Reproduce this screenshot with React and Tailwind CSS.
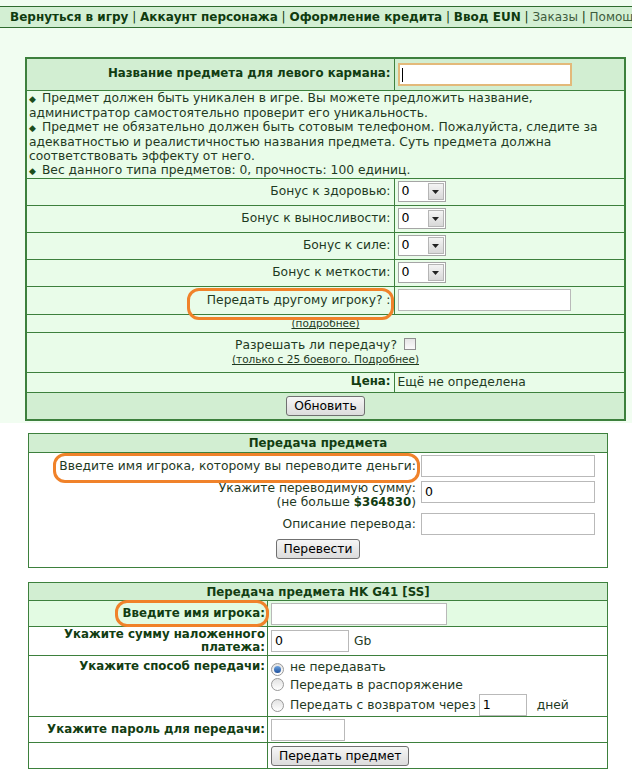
import React from 'react';

const nav = [
  { label: 'Вернуться в игру', bold: true },
  { label: 'Аккаунт персонажа', bold: true },
  { label: 'Оформление кредита', bold: true },
  { label: 'Ввод EUN', bold: true },
  { label: 'Заказы', bold: false },
  { label: 'Помощь', bold: false },
];

const bonuses = ['Бонус к здоровью:', 'Бонус к выносливости:', 'Бонус к силе:', 'Бонус к меткости:'];

const notes = [
  'Предмет должен быть уникален в игре. Вы можете предложить название, администратор самостоятельно проверит его уникальность.',
  'Предмет не обязательно должен быть сотовым телефоном. Пожалуйста, следите за адекватностью и реалистичностью названия предмета. Суть предмета должна соответствовать эффекту от него.',
  'Вес данного типа предметов: 0, прочность: 100 единиц.',
];

// orange marker ring drawn over a label
const Ring = ({ className }) => (
  <span className={`pointer-events-none absolute rounded-[12px] border-[3px] border-[#f0822a] ${className}`} />
);

const TextBox = ({ className = '', value = '' }) => (
  <div className={`h-[22px] border border-[#b9b9b9] bg-white pl-[3px] text-[12.5px] leading-[20px] text-black ${className}`}>
    {value}
  </div>
);

const Select = () => (
  <div className="flex h-[21px] w-[48px] items-center border border-[#a5a5a5] bg-white">
    <span className="flex-1 pl-[3px] text-[12.5px] text-black">0</span>
    <span className="mr-[1px] flex h-[17px] w-[16px] items-center justify-center border border-[#b5b5b5] bg-gradient-to-b from-[#f4f4f4] to-[#d8d8d8]">
      <svg width="7" height="4" viewBox="0 0 7 4"><path d="M0 0h7L3.5 4z" fill="#222" /></svg>
    </span>
  </div>
);

const Button = ({ children, className = '' }) => (
  <span
    className={`inline-block rounded-[3px] border border-[#707070] bg-gradient-to-b from-[#f6f6f6] to-[#dcdcdc] px-[7px] text-[12.3px] leading-[18px] text-black ${className}`}
  >
    {children}
  </span>
);

const Radio = ({ checked }) => (
  <span className="mr-[6px] inline-flex h-[13px] w-[13px] items-center justify-center rounded-full border border-[#9a9a9a] bg-gradient-to-b from-[#e2e2e2] to-[#ffffff] align-[-2px]">
    {checked && <span className="h-[7px] w-[7px] rounded-full bg-gradient-to-b from-[#6fa4e0] to-[#1d4f9c]" />}
  </span>
);

export default function App() {
  return (
    <div className="min-h-[772px] w-[632px] overflow-hidden bg-white font-['DejaVu_Sans',Verdana,sans-serif] text-[12.3px] text-[#1f3a1f]">
      <div className="bg-[#f1fdf1] pb-[2px] pt-[6px]">
        {/* top menu */}
        <div className="h-[22px] whitespace-nowrap border-y border-[#2f6b2f] bg-[#d3efd3] pl-[10px] text-[12px] leading-[20px] text-[#0f3b0f]">
          {nav.map((item, i) => (
            <span key={item.label}>
              {i > 0 && <span className="font-normal"> | </span>}
              <span className={item.bold ? 'font-bold' : 'font-normal text-[#3d5c3d]'}>{item.label}</span>
            </span>
          ))}
        </div>

        {/* item name / bonuses */}
        <table className="ml-[25px] mt-[29px] w-[601px] border-collapse border-2 border-[#3d803d]">
          <tbody>
            <tr className="h-[32px] bg-[#d2eed2]">
              <td className="w-[368px] border border-[#3d803d] pr-[3px] text-right text-[11.8px] font-bold text-[#123d12]">
                Название предмета для левого кармана:
              </td>
              <td className="border border-[#3d803d] pl-[3px]">
                <div className="h-[23px] w-[174px] border-2 border-[#e3b97a] bg-white pl-[2px]">
                  <span className="mt-[3px] block h-[14px] w-[1px] bg-black" />
                </div>
              </td>
            </tr>
            <tr className="bg-[#e9fce9]">
              <td colSpan={2} className="border border-[#3d803d] pl-[2px] leading-[14px]">
                {notes.map((n) => (
                  <div key={n}>
                    <span className="mr-[6px] text-[9px] text-[#1b4d1b]">◆</span>
                    {n}
                  </div>
                ))}
              </td>
            </tr>
            {bonuses.map((b) => (
              <tr key={b} className="h-[27px] bg-[#e9fce9]">
                <td className="border border-[#3d803d] pr-[3px] text-right">{b}</td>
                <td className="border border-[#3d803d] pl-[3px]">
                  <Select />
                </td>
              </tr>
            ))}
            <tr className="h-[28px] bg-[#e9fce9]">
              <td className="relative border border-[#3d803d] pr-[3px] text-right">
                Передать другому игроку? :
                <Ring className="-bottom-[6px] left-[160px] right-[0px] top-[1px]" />
              </td>
              <td className="border border-[#3d803d] pl-[3px]">
                <TextBox className="w-[173px]" />
              </td>
            </tr>
            <tr className="h-[18px] bg-[#e9fce9]">
              <td colSpan={2} className="border border-[#3d803d] text-center text-[10.5px] leading-[12px] underline">
                (подробнее)
              </td>
            </tr>
            <tr className="h-[40px] bg-[#e9fce9]">
              <td colSpan={2} className="border border-[#3d803d] text-center leading-[15px]">
                <div>
                  Разрешать ли передачу?
                  <span className="ml-[7px] inline-block h-[12px] w-[12px] border border-[#8f8f8f] bg-gradient-to-b from-[#e6e6e6] to-[#fafafa] align-[-1px]" />
                </div>
                <div className="text-[10.5px] leading-[13px] underline">(только с 25 боевого. Подробнее)</div>
              </td>
            </tr>
            <tr className="h-[20px] bg-[#e9fce9]">
              <td className="border border-[#3d803d] pr-[3px] text-right text-[11.8px] font-bold text-[#123d12]">Цена:</td>
              <td className="border border-[#3d803d] pl-[3px]">Ещё не определена</td>
            </tr>
            <tr className="h-[28px] bg-[#d2eed2]">
              <td colSpan={2} className="border border-[#3d803d] text-center">
                <Button>Обновить</Button>
              </td>
            </tr>
          </tbody>
        </table>
      </div>

      {/* money transfer */}
      <table className="ml-[28px] mt-[10px] w-[580px] border-collapse border border-[#3d803d]">
        <tbody>
          <tr className="h-[19px] bg-[#d2eed2]">
            <td className="border border-[#3d803d] text-center text-[11.8px] font-bold leading-[17px] text-[#123d12]">
              Передача предмета
            </td>
          </tr>
          <tr>
            <td className="px-[2px] pb-[8px] pt-[2px]">
              <div className="grid grid-cols-[388px_1fr] gap-x-[2px] gap-y-[4px]">
                <div className="relative flex h-[22px] items-center justify-end pr-[3px]">
                  Введите имя игрока, которому вы переводите деньги:
                  <Ring className="-bottom-[6px] left-[22px] -right-[1px] -top-[2px]" />
                </div>
                <TextBox className="w-[174px]" />
                <div className="pr-[3px] text-right leading-[14px]">
                  Укажите переводимую сумму:
                  <br />
                  (не больше <b className="text-[11.8px] text-[#123d12]">$364830</b>)
                </div>
                <TextBox className="w-[174px]" value="0" />
                <div className="flex h-[22px] items-center justify-end pr-[3px]">Описание перевода:</div>
                <TextBox className="w-[174px]" />
                <div className="col-span-2 text-center">
                  <Button>Перевести</Button>
                </div>
              </div>
            </td>
          </tr>
        </tbody>
      </table>

      {/* item transfer */}
      <table className="ml-[28px] mt-[14px] w-[580px] border-collapse border border-[#3d803d]">
        <tbody>
          <tr className="h-[18px] bg-[#d2eed2]">
            <td colSpan={2} className="border border-[#3d803d] text-center text-[11.8px] font-bold leading-[16px] text-[#123d12]">
              Передача предмета HK G41 [SS]
            </td>
          </tr>
          <tr className="h-[26px] bg-[#e3fbe3]">
            <td className="relative w-[239px] border border-[#3d803d] pr-[2px] text-right text-[11.8px] font-bold text-[#123d12]">
              Введите имя игрока:
              <Ring className="-bottom-[1px] -right-[2px] left-[86px] -top-[1px]" />
            </td>
            <td className="border border-[#3d803d] pl-[3px]">
              <TextBox className="w-[176px]" />
            </td>
          </tr>
          <tr className="h-[29px]">
            <td className="border border-[#3d803d] pr-[2px] text-right text-[11.8px] font-bold leading-[13px] text-[#123d12]">
              Укажите сумму наложенного
              <br />
              платежа:
            </td>
            <td className="border border-[#3d803d] pl-[3px]">
              <div className="flex items-center">
                <TextBox className="w-[78px]" value="0" />
                <span className="ml-[5px]">Gb</span>
              </div>
            </td>
          </tr>
          <tr className="h-[60px]">
            <td className="border border-[#3d803d] pr-[2px] pt-[2px] text-right align-top text-[11.8px] font-bold text-[#123d12]">
              Укажите способ передачи:
            </td>
            <td className="border border-[#3d803d] pl-[3px] pt-[2px] align-top leading-[18px]">
              <div>
                <Radio checked />
                не передавать
              </div>
              <div>
                <Radio />
                Передать в распоряжение
              </div>
              <div className="flex items-center">
                <Radio />
                Передать с возвратом через
                <TextBox className="ml-[3px] w-[48px]" value="1" />
                <span className="ml-[10px]">дней</span>
              </div>
            </td>
          </tr>
          <tr className="h-[26px]">
            <td className="whitespace-nowrap border border-[#3d803d] pr-[2px] text-right text-[11.8px] font-bold text-[#123d12]">
              Укажите пароль для передачи:
            </td>
            <td className="border border-[#3d803d] pl-[3px]">
              <TextBox className="w-[74px]" />
            </td>
          </tr>
          <tr className="h-[26px]">
            <td className="border border-[#3d803d]" />
            <td className="border border-[#3d803d] pl-[3px]">
              <Button className="px-[6px]">Передать предмет</Button>
            </td>
          </tr>
        </tbody>
      </table>
    </div>
  );
}
